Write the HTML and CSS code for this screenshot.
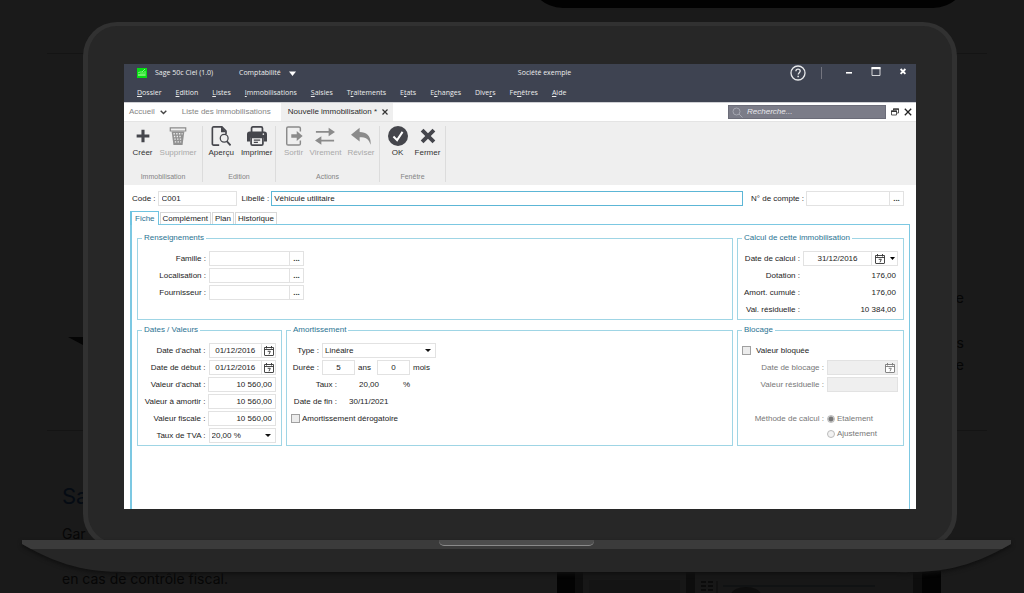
FILE: index.html
```html
<!DOCTYPE html>
<html lang="fr">
<head>
<meta charset="utf-8">
<title>Sage 50c Ciel</title>
<link rel="stylesheet" href="styles.css">
</head>
<body>
<svg class="defs" width="0" height="0" aria-hidden="true">
  <symbol id="cal" viewBox="0 0 12 12"><path d="M1.500 2.500h9v7.500q0 .5-.5.5H2q-.5 0-.5-.5z" fill="#fff" stroke="currentColor" stroke-width=".9"/><path d="M1.500 4.500h9M3.500 1v2.500M8.500 1v2.500" fill="none" stroke="currentColor" stroke-width=".9"/><path d="M4.700 6.300h2.600L6 9.300" fill="none" stroke="currentColor" stroke-width=".9"/></symbol>
</svg>
<div class="backdrop">
  <div class="notch"></div>
  <div class="rule rule-top"></div>
  <div class="rule rule-mid"></div>
  <svg class="arrow" viewBox="0 0 30 16" aria-hidden="true"><path d="M0 0h30v16z" fill="#050505"/></svg>
  <p class="ghost ghost-title">Sa</p>
  <p class="ghost ghost-line">Gar</p>
  <p class="ghost ghost-last">en cas de contrôle fiscal.</p>
  <p class="ghost edge edge-a">e</p>
  <p class="ghost edge edge-b">s</p>
  <p class="ghost edge edge-c">e</p>
  <svg class="tablet" viewBox="0 0 384 30" aria-hidden="true"><path d="M0 0h384v30H0z" fill="#0d0d0d"/><path d="M0 0h18v30H0zM365 0h19v30h-19z" fill="#030303"/><path d="M26 0h103v30H26zM138 0h218v30H138z" fill="#171717"/><path d="M32 9h91v21H32z" fill="#141414"/><path d="M144 11h5m2 0h5m-12 4h5m2 0h5m-12 4h5m2 0h5" stroke="#0b0b0b" stroke-width="2"/><path d="M160 10v12" stroke="#0c0c0c"/><path d="M166 15h152" stroke="#0b0f11"/><ellipse cx="189" cy="24" rx="15" ry="8" fill="#0d0d0d"/></svg>
</div>

<main class="laptop">
<div class="lid">
<div class="app">
  <header class="titlebar">
    <div class="title-row">
      <svg class="logo" viewBox="0 0 10 10" aria-hidden="true"><path d="M0 0h10v10H0z" fill="#08dc14"/><path d="M1 5l2-1 2 0 3-3M2 6v2m2-3v3m2-4v4m2-5v5M1 7h7" stroke="#baffae" stroke-width=".7" fill="none"/></svg>
      <span class="product">Sage 50c Ciel (1.0)</span>
      <button class="module">Comptabilité <svg viewBox="0 0 7 5" width="7" height="5" aria-hidden="true"><path d="M0 .5h7L3.500 5z" fill="#fff"/></svg></button>
      <span class="company">Société exemple</span>
      <div class="win">
        <button aria-label="Aide"><svg width="16" height="16" viewBox="0 0 16 16"><circle cx="8" cy="8" r="7" fill="none" stroke="#e8e9eb" stroke-width="1.300"/><path d="M5.900 6.200c0-1.500 1-2 2.100-2 1.200 0 2.200.7 2.200 1.900 0 1.500-2 1.700-2 3.400" fill="none" stroke="#e8e9eb" stroke-width="1.300"/><path d="M7.400 10.800h1.500v1.500H7.400z" fill="#e8e9eb"/></svg></button>
        <i class="bar"></i>
        <div class="frame-buttons">
        <button aria-label="Réduire"><svg width="10" height="12" viewBox="0 0 10 12"><path d="M2 6h6v1.600H2z" fill="#fff"/></svg></button>
        <button aria-label="Agrandir"><svg width="10" height="12" viewBox="0 0 10 12"><path d="M1 1.500h8v8H1z" fill="none" stroke="#e4e5e8" stroke-width=".9"/><path d="M.5 1h9v2.200h-9z" fill="#fff"/></svg></button>
        <button aria-label="Quitter"><svg width="10" height="12" viewBox="0 0 10 12"><path d="M2.600 3l4.800 4.800m0-4.800L2.600 7.800" stroke="#fff" stroke-width="1.800"/></svg></button>
        </div>
      </div>
    </div>
    <nav class="menu">
      <a href="#"><u>D</u>ossier</a><a href="#"><u>E</u>dition</a><a href="#"><u>L</u>istes</a><a href="#"><u>I</u>mmobilisations</a><a href="#"><u>S</u>aisies</a><a href="#">T<u>r</u>aitements</a><a href="#">E<u>t</u>ats</a><a href="#">E<u>c</u>hanges</a><a href="#">Dive<u>r</u>s</a><a href="#">Fe<u>n</u>êtres</a><a href="#"><u>A</u>ide</a>
    </nav>
  </header>

  <div class="docs">
    <button class="doc">Accueil <svg width="7" height="5" viewBox="0 0 7 5" aria-hidden="true"><path d="M.7.7l2.800 2.800L6.300.7" fill="none" stroke="#444" stroke-width="1.400"/></svg></button>
    <button class="doc">Liste des immobilisations</button>
    <button class="doc current">Nouvelle immobilisation * <svg width="6" height="6" viewBox="0 0 6 6" aria-hidden="true"><path d="M.5.5l5 5m0-5l-5 5" stroke="#333" stroke-width="1.200"/></svg></button>
    <div class="search"><svg width="11" height="11" viewBox="0 0 11 11" aria-hidden="true"><circle cx="4.500" cy="4.500" r="3.500" fill="none" stroke="#a5a7b1"/><path d="M7 7l3.500 3.500" stroke="#a5a7b1"/></svg><input type="text" placeholder="Recherche..." aria-label="Recherche"></div>
    <button class="mini" aria-label="Restaurer"><svg width="8" height="8" viewBox="0 0 8 8"><path d="M2.500 2.500V1h5v4H6M.5 3h5v4h-5z" fill="none" stroke="#444" stroke-width=".9"/><path d="M2 .5h6v1.200H2zM0 2.500h6v1.600H0z" fill="#333"/></svg></button>
    <button class="mini" aria-label="Fermer l'onglet"><svg width="8" height="8" viewBox="0 0 8 8"><path d="M.8.8l6.400 6.400m0-6.400L.8 7.200" stroke="#222" stroke-width="1.300"/></svg></button>
  </div>

  <div class="ribbon">
    <section class="group g-one"><div class="tools">
      <button class="tool"><svg viewBox="0 0 22 22"><path d="M9.300 4h3.400v5.300H18v3.400h-5.300V18H9.300v-5.300H4V9.300h5.300z" fill="#45464c"/></svg>Créer</button>
      <button class="tool" disabled><svg viewBox="0 0 22 22"><path d="M2.500 2h17v3.500h-17z" fill="none" stroke="#8b8b8b" stroke-width="1.300"/><path d="M4 6l2 15h10l2-15z" fill="#919191"/><path d="M6 8.500h10M6.500 11.500h9M7 14.500h8M7.500 17.500h7" stroke="#eee" stroke-width="1.500" stroke-dasharray="1.500 1.500"/></svg>Supprimer</button>
    </div><h2>Immobilisation</h2></section>
    <section class="group g-two"><div class="tools">
      <button class="tool"><svg viewBox="0 0 22 22"><path d="M9 21H3Q1.500 21 1.500 19.500v-17Q1.500 1 3 1H12l4.500 4.500V9" fill="none" stroke="#45464c" stroke-width="1.800"/><path d="M11 .5v6.500h6z" fill="#45464c"/><circle cx="14.500" cy="13.500" r="4.300" fill="#efefef" stroke="#45464c" stroke-width="1.400"/><path d="M17.500 16.800l4 4.500" stroke="#45464c" stroke-width="2"/></svg>Aperçu</button>
      <button class="tool"><svg viewBox="0 0 22 22"><path d="M5 7V2.500Q5 1 6.500 1h9Q17 1 17 2.500V7" fill="none" stroke="#45464c" stroke-width="1.900"/><path d="M3 6h16q3 0 3 3v8h-3.500v-4h-15v4H0V9q0-3 3-3z" fill="#45464c"/><path d="M4.500 12.500h13v7q0 1.500-1.500 1.500H6q-1.500 0-1.500-1.500z" fill="#efefef" stroke="#45464c" stroke-width="1.900"/><path d="M7.500 15.500h7M7.500 18h4.500" stroke="#45464c" stroke-width="1.200"/><circle cx="18" cy="9" r=".9" fill="#efefef"/></svg>Imprimer</button>
    </div><h2>Edition</h2></section>
    <section class="group g-three"><div class="tools">
      <button class="tool" disabled><svg viewBox="0 0 22 22"><path d="M18 6V2.500Q18 1 16.500 1h-12Q3 1 3 2.500v17Q3 21 4.500 21h12q1.500 0 1.500-1.500V16" fill="none" stroke="#8b8b8b" stroke-width="1.600"/><path d="M8 9h6V5.500l6.500 5.500-6.500 5.500V13H8z" fill="#8b8b8b"/></svg>Sortir</button>
      <button class="tool" disabled><svg viewBox="0 0 22 22"><path d="M1 5.500h14V1.800L22 6.500l-7 4.700V7.500H1zM21 15H7v-3.700L0 16l7 4.700V17h14z" fill="#8b8b8b"/></svg>Virement</button>
      <button class="tool" disabled><svg viewBox="0 0 22 22"><path d="M0 9.500L9.500 2v4.500c8 0 13 5 12 14-2-6-5-8-12-8V17z" fill="#8b8b8b"/></svg>Réviser</button>
    </div><h2>Actions</h2></section>
    <section class="group g-four"><div class="tools">
      <button class="tool"><svg viewBox="0 0 22 22"><circle cx="11" cy="11" r="11" fill="#45464c"/><path d="M6 11.500l4 4 6-9" fill="none" stroke="#fff" stroke-width="2.200"/></svg>OK</button>
      <button class="tool"><svg viewBox="0 0 22 22"><path d="M4.500 4.500l13 13m0-13l-13 13" stroke="#45464c" stroke-width="4.300"/></svg>Fermer</button>
    </div><h2>Fenêtre</h2></section>
  </div>

  <form class="sheet" onsubmit="return false">
    <div class="ident">
      <label for="code">Code :</label><input class="box code" id="code" type="text" value="C001">
      <label for="lib">Libellé :</label><input class="box lib" id="lib" type="text" value="Véhicule utilitaire">
      <label for="cpt">N° de compte :</label><span class="picker cpt"><input id="cpt" type="text"><button type="button" aria-label="Choisir un compte">...</button></span>
    </div>
    <div class="tabs" role="tablist">
      <button type="button" role="tab" aria-selected="true" class="tab on">Fiche</button><button type="button" role="tab" class="tab">Complément</button><button type="button" role="tab" class="tab">Plan</button><button type="button" role="tab" class="tab">Historique</button>
    </div>
    <div class="panel">
      <fieldset class="rens"><legend>Renseignements</legend>
        <div class="row"><label class="l-wide" for="fam">Famille :</label><span class="picker ref"><input id="fam" type="text"><button type="button" aria-label="Choisir une famille">...</button></span></div>
        <div class="row"><label class="l-wide" for="loc">Localisation :</label><span class="picker ref"><input id="loc" type="text"><button type="button" aria-label="Choisir une localisation">...</button></span></div>
        <div class="row"><label class="l-wide" for="fou">Fournisseur :</label><span class="picker ref"><input id="fou" type="text"><button type="button" aria-label="Choisir un fournisseur">...</button></span></div>
      </fieldset>
      <fieldset class="calc"><legend>Calcul de cette immobilisation</legend>
        <div class="row"><label class="l-calc" for="dc">Date de calcul :</label><span class="picker grow"><input class="mid" id="dc" type="text" value="31/12/2016"><button type="button" class="wide" aria-label="Calendrier"><svg width="12" height="12"><use href="#cal"/></svg><svg width="5" height="3" viewBox="0 0 5 3"><path d="M0 0h5L2.500 3z"/></svg></button></span></div>
        <div class="row"><span class="l-calc">Dotation :</span><output>176,00</output></div>
        <div class="row"><span class="l-calc">Amort. cumulé :</span><output>176,00</output></div>
        <div class="row"><span class="l-calc">Val. résiduelle :</span><output>10 384,00</output></div>
      </fieldset>
      <fieldset><legend>Dates / Valeurs</legend>
        <div class="row"><label class="l-wide" for="da">Date d'achat :</label><span class="picker val"><input class="mid" id="da" type="text" value="01/12/2016"><button type="button" aria-label="Calendrier"><svg width="12" height="12"><use href="#cal"/></svg></button></span></div>
        <div class="row"><label class="l-wide" for="dd">Date de début :</label><span class="picker val"><input class="mid" id="dd" type="text" value="01/12/2016"><button type="button" aria-label="Calendrier"><svg width="12" height="12"><use href="#cal"/></svg></button></span></div>
        <div class="row"><label class="l-wide" for="va">Valeur d'achat :</label><input class="box val num" id="va" type="text" value="10 560,00"></div>
        <div class="row"><label class="l-wide" for="vm">Valeur à amortir :</label><input class="box val num" id="vm" type="text" value="10 560,00"></div>
        <div class="row"><label class="l-wide" for="vf">Valeur fiscale :</label><input class="box val num" id="vf" type="text" value="10 560,00"></div>
        <div class="row"><label class="l-wide" for="tva">Taux de TVA :</label><span class="drop val"><select id="tva"><option>20,00 %</option></select></span></div>
      </fieldset>
      <fieldset class="amo"><legend>Amortissement</legend>
        <div class="row"><label class="l-type" for="ty">Type :</label><span class="drop type"><select id="ty"><option>Linéaire</option></select></span></div>
        <div class="row"><label class="l-type" for="an">Durée :</label><input class="box dur" id="an" type="text" value="5"><label class="unit" for="an">ans</label><input class="box dur" id="mo" type="text" value="0"><label for="mo">mois</label></div>
        <div class="row"><span class="l-fin">Taux :</span><output class="rate">20,00</output><span>%</span></div>
        <div class="row"><span class="l-fin">Date de fin :</span><output class="end">30/11/2021</output></div>
        <div class="row check"><input type="checkbox" id="der"><label for="der">Amortissement dérogatoire</label></div>
      </fieldset>
      <fieldset class="bloc"><legend>Blocage</legend>
        <div class="row check loose"><input type="checkbox" id="vb"><label for="vb">Valeur bloquée</label></div>
        <div class="row dim"><label class="l-bloc" for="db">Date de blocage :</label><span class="picker grow"><input id="db" type="text" disabled><button type="button" disabled aria-label="Calendrier"><svg width="12" height="12"><use href="#cal"/></svg></button></span></div>
        <div class="row dim"><label class="l-bloc" for="vr">Valeur résiduelle :</label><input class="box grow" id="vr" type="text" disabled></div>
        <div class="row dim method"><span class="l-bloc">Méthode de calcul :</span><div class="radios"><span><input type="radio" name="m" id="m1" checked disabled><label for="m1">Etalement</label></span><span><input type="radio" name="m" id="m2" disabled><label for="m2">Ajustement</label></span></div></div>
      </fieldset>
    </div>
  </form>
</div>
</div>
<div class="base">
  <svg viewBox="0 0 989 33" preserveAspectRatio="none" aria-hidden="true"><path d="M0 0h989v4C935 36 900 32 860 32H130C90 32 54 36 0 4z" fill="#262626"/><path d="M0 0h989v4l-9 5H9L0 4z" fill="#3b3b3b"/></svg>
  <div class="lip"></div>
</div>
</main>
</body>
</html>
```
FILE: styles.css
```css
* { box-sizing: border-box; }
body { margin: 0; background: #1a1a1a; font: 8px/10px "Liberation Sans", Arial, sans-serif; color: #1c1c1c; position: relative; min-height: 593px; }
button, input, select { font: inherit; color: inherit; margin: 0; padding: 0; border: 0; background: none; min-width: 0; border-radius: 0; }
h2, p { margin: 0; font-weight: normal; }
svg { display: block; flex: none; }
a { color: inherit; text-decoration: none; }
.defs { position: absolute; }

/* page behind the laptop */
.backdrop { position: absolute; inset: 0; overflow: hidden; }
.notch { position: absolute; top: -62px; left: 528px; width: 440px; height: 70px; background: #020202; border-radius: 50px; }
.rule { position: absolute; left: 47px; right: 37px; height: 1px; background: #141414; }
.rule-top { top: 53px; }
.rule-mid { top: 430px; }
.arrow { position: absolute; left: 68px; top: 337px; width: 30px; height: 16px; }
.ghost { position: absolute; left: 62px; font-family: Inter, "Liberation Sans", sans-serif; font-size: 14px; line-height: 20px; color: #060606; }
.ghost-title { top: 482px; font-size: 22px; line-height: 28px; color: #050b13; }
.ghost-line { top: 524px; }
.ghost-last { top: 569px; }
.edge { left: auto; right: 60px; }
.edge-a { top: 288px; }
.edge-b { top: 333px; }
.edge-c { top: 355px; }
.tablet { position: absolute; left: 557px; top: 571px; width: 384px; height: 30px; }

/* laptop */
.laptop { position: relative; padding-top: 22px; }
.lid { margin: 0 67px 0 83px; padding: 38px 36px 34px; border: 5px solid #313131; border-top-width: 4px; border-radius: 34px; background: #272727; }
.base { position: relative; margin: -8px 13px 0 22px; display: flex; justify-content: center; }
.base > svg { width: 100%; height: 33px; filter: drop-shadow(0 2px 2px #0f0f0f); }
.lip { position: absolute; top: 0; width: 155px; height: 6px; background: #4d4d4d; border-bottom: 1px solid #8a8a8a; border-radius: 0 0 5px 5px; }
.app { background: #fff; min-height: 445px; display: flex; flex-direction: column; overflow: hidden; }

/* title and menu */
.titlebar { background: #3e4351; color: #eceded; font-family: "Open Sans", "Noto Sans", sans-serif; font-size: 7px; border-bottom: 1px solid #cfd0d4; padding: 0 8px 4px 13px; }
.title-row { height: 18px; display: grid; grid-template-columns: 10px 74px auto 1fr auto; align-items: center; position: relative; }
.logo { width: 10px; height: 10px; }
.product { padding-left: 8px; }
.module { display: flex; align-items: center; gap: 8px; padding-left: 18px; }
.company { position: absolute; left: 0; right: 0; text-align: center; padding-left: 44px; pointer-events: none; }
.win { grid-column: 5; display: flex; align-items: center; gap: 15px; }
.frame-buttons { display: flex; gap: 17px; padding-left: 7px; padding-bottom: 3px; }
.bar { width: 1px; height: 12px; background: #74757f; }
.menu { display: flex; gap: 14px; padding-top: 5px; line-height: 11px; }
.menu u { text-decoration: underline; text-underline-offset: 1px; }

/* open documents */
.docs { display: flex; align-items: center; height: 19px; padding-right: 4px; border-bottom: 1px solid #e4e4e4; }
.doc { color: #858585; display: flex; align-items: center; gap: 5px; height: 18px; padding: 0 10px 0 5px; }
.doc.current { background: #efefef; color: #2d2d2d; padding: 0 5px 0 7px; }
.search { margin-left: auto; display: flex; align-items: center; gap: 4px; width: 158px; height: 14px; padding: 0 3px; background: #7b7c88; border: 1px solid #6b6c78; }
.search input { flex: 1; font-style: italic; }
.search input::placeholder { color: #e8e8ec; opacity: 1; }
.mini { margin-left: 5px; }

/* ribbon */
.ribbon { display: flex; background: #efefef; height: 63px; padding: 4px 0 3px; flex: none; }
.group { display: flex; flex-direction: column; justify-content: space-between; align-items: center; border-right: 1px solid #dcdcdc; }
.g-one { width: 79px; }
.g-two { width: 73px; }
.g-three { width: 104px; }
.g-four { width: 66px; }
.tools { display: flex; gap: 7px; padding-left: 3px; }
.g-three .tools { gap: 6px; }
.tool { display: flex; flex-direction: column; align-items: center; gap: 2px; color: #333; min-width: 20px; }
.tool svg { width: 20px; height: 20px; }
.tool:disabled { color: #a9a9a9; }
.group h2 { font-size: 7px; line-height: 10px; color: #848484; }

/* form */
.sheet { flex: 1; display: flex; flex-direction: column; padding: 6px 6px 0; }
.ident { display: flex; align-items: center; height: 15px; padding: 0 6px 0 2px; gap: 2px; }
.box, .picker, .drop { border: 1px solid #e2e2e2; height: 15px; background: #fff; }
.box { padding: 0 3px; }
.code { width: 79px; margin-right: 3px; }
.lib { flex: 1; border-color: #5cb6d6; margin-right: 6px; padding: 0 2px; }
.picker { display: flex; }
.picker input { flex: 1; width: 0; padding: 0 2px; }
.picker button { width: 14px; border-left: 1px solid #e2e2e2; display: flex; align-items: center; justify-content: center; gap: 4px; font-weight: bold; color: #333; }
.picker .mid { text-align: center; }
.picker .wide { width: 26px; }
.cpt { width: 98px; }
.tabs { display: flex; gap: 1px; height: 13px; margin-top: 5px; align-items: flex-end; }
.tab { height: 12px; border: 1px solid #d8d8d8; border-bottom: 0; padding: 0 2px; }
.tab.on { height: 14px; border: 1px solid #6fc3e0; border-bottom: 0; border-left-width: 2px; color: #2b7392; background: #fff; padding: 0 3px; margin-bottom: -1px; position: relative; }
.panel { flex: 1; min-height: 285px; border: solid #7cc8e2; border-width: 1px 1px 0 2px; padding: 8px 5px 0 5px; display: grid; grid-template-columns: 145px 1fr 167px; grid-template-rows: auto auto; align-content: start; column-gap: 4px; row-gap: 5px; }
fieldset { margin: 0; min-width: 0; border: 1px solid #9fd5e5; padding: 8px 5px 2px 0; display: flex; flex-direction: column; gap: 2px; }
legend { color: #2b7392; line-height: 10px; padding: 0 2px; margin-left: 4px; }
.rens { grid-column: span 2; }
.row { display: flex; align-items: center; gap: 3px; height: 15px; }
.l-wide { width: 68px; text-align: right; }
.l-calc { width: 62px; text-align: right; white-space: nowrap; }
.l-type { width: 32px; text-align: right; }
.l-fin { width: 50px; text-align: right; }
.l-bloc { width: 86px; text-align: right; }
.ref { width: 95px; }
.val { width: 68px; }
.num { text-align: right; }
.type { width: 114px; }
.dur { width: 33px; text-align: center; }
.unit { width: 16px; }
.rate { width: 60px; padding-left: 19px; }
.end { padding-left: 9px; }
.grow { flex: 1; }
.calc .row output { flex: 1; text-align: right; padding-right: 2px; }
.drop { display: flex; align-items: center; position: relative; }
.drop select { appearance: none; width: 100%; height: 13px; padding: 0 2px; }
.drop::after { content: ""; position: absolute; right: 4px; border: solid transparent; border-width: 3px 3px 0; border-top-color: #111; pointer-events: none; }
input[type="checkbox"] { appearance: none; width: 9px; height: 9px; border: 1px solid #a0a0a0; background: #ececec; }
input[type="checkbox"]:checked { background: #555; }
.check { padding-left: 4px; gap: 2px; }
.check.loose { gap: 5px; }
.dim { color: #777; }
.dim .picker, .dim .box { background: #efefef; }
.dim .picker button { color: #777; border: 0; }
.method { margin-top: 17px; height: auto; align-items: flex-start; line-height: 15px; }
.radios span { display: flex; align-items: center; gap: 2px; height: 15px; }
input[type="radio"] { appearance: none; width: 8px; height: 8px; border: 1px solid #bbb; border-radius: 50%; background: #f2f2f2; }
input[type="radio"]:checked { background: radial-gradient(#777 0 2px, #d8d8d8 3px); }
```
